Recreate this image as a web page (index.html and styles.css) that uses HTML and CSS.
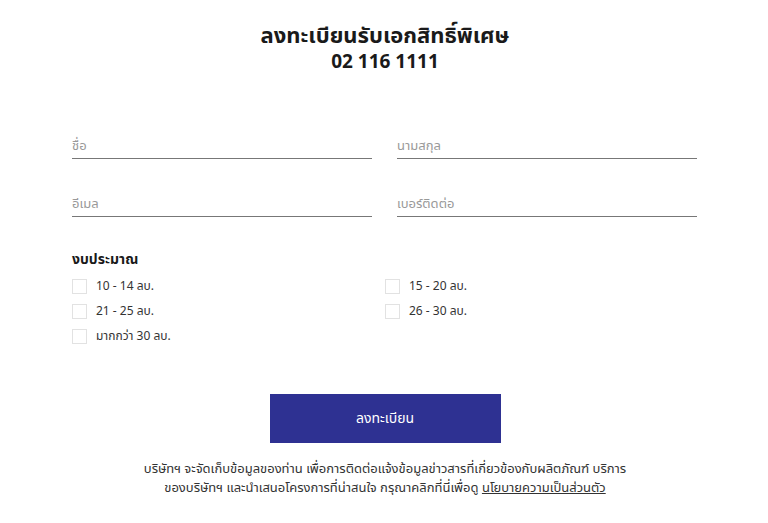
FILE: index.html
```html
<!DOCTYPE html>
<html>
<head>
    <title>ลงทะเบียนรับเอกสิทธิ์พิเศษ</title>
    <link rel="stylesheet" href="styles.css">
</head>
<body>
    <div class="container">
        <div class="heading">
            <h1>ลงทะเบียนรับเอกสิทธิ์พิเศษ</h1>
            <div class="phone">02 116 1111</div>
        </div>

        <form class="form">
            <div class="fields">
                <input class="field" type="text" placeholder="ชื่อ">
                <input class="field" type="text" placeholder="นามสกุล">
                <input class="field" type="text" placeholder="อีเมล">
                <input class="field" type="text" placeholder="เบอร์ติดต่อ">
            </div>

            <div class="budget">
                <h3>งบประมาณ</h3>
                <div class="options">
                    <label class="option"><span class="box"></span>10 - 14 ลบ.</label>
                    <label class="option right"><span class="box"></span>15 - 20 ลบ.</label>
                    <label class="option"><span class="box"></span>21 - 25 ลบ.</label>
                    <label class="option right"><span class="box"></span>26 - 30 ลบ.</label>
                    <label class="option"><span class="box"></span>มากกว่า 30 ลบ.</label>
                </div>
            </div>

            <div class="actions">
                <button type="button" class="submit">ลงทะเบียน</button>
            </div>

            <p class="note">
                บริษัทฯ จะจัดเก็บข้อมูลของท่าน เพื่อการติดต่อแจ้งข้อมูลข่าวสารที่เกี่ยวข้องกับผลิตภัณฑ์ บริการ<br>
                ของบริษัทฯ และนำเสนอโครงการที่น่าสนใจ กรุณาคลิกที่นี่เพื่อดู <a href="#">นโยบายความเป็นส่วนตัว</a>
            </p>
        </form>
    </div>
</body>
</html>
```

FILE: styles.css
```css
body {
    margin: 0;
    background: #fff;
    font-family: "Noto Sans Thai", "Noto Sans", "DejaVu Sans", sans-serif;
    color: #222;
}
.container {
    width: 626px;
    margin: 0 auto;
    padding: 22px 0 0 2px;
}
.heading {
    text-align: center;
    color: #1a1a1a;
}
.heading h1 {
    margin: 0;
    font-size: 22px;
    line-height: 30px;
    font-weight: 700;
}
.phone {
    font-size: 19px;
    line-height: 22px;
    font-weight: 700;
}
.fields {
    display: grid;
    grid-template-columns: 300px 300px;
    column-gap: 25px;
    row-gap: 30px;
    margin-top: 57px;
}
.field {
    border: none;
    border-bottom: 1px solid #777;
    padding: 2px 0 0 0;
    height: 28px;
    box-sizing: border-box;
    font-family: inherit;
    font-size: 13px;
    outline: none;
}
.field::placeholder {
    color: #999;
}
.budget {
    margin-top: 33px;
}
.budget h3 {
    margin: 0 0 8px 0;
    font-size: 14px;
    line-height: 20px;
    font-weight: 700;
    color: #1a1a1a;
}
.options {
    display: grid;
    grid-template-columns: 313px 300px;
    row-gap: 9px;
}
.option {
    display: flex;
    align-items: center;
    gap: 9px;
    font-size: 12px;
    color: #333;
    height: 16px;
}
.box {
    width: 15px;
    height: 15px;
    border: 1px solid #e2e2e2;
    box-sizing: border-box;
}
.actions {
    display: flex;
    justify-content: center;
    margin-top: 50px;
}
.submit {
    width: 231px;
    height: 49px;
    border: none;
    background: #2e3192;
    color: #fff;
    font-family: inherit;
    font-size: 14px;
    cursor: pointer;
}
.note {
    margin: 17px 0 0 0;
    text-align: center;
    font-size: 13px;
    line-height: 19px;
    color: #333;
}
.note a {
    color: #333;
}
```
